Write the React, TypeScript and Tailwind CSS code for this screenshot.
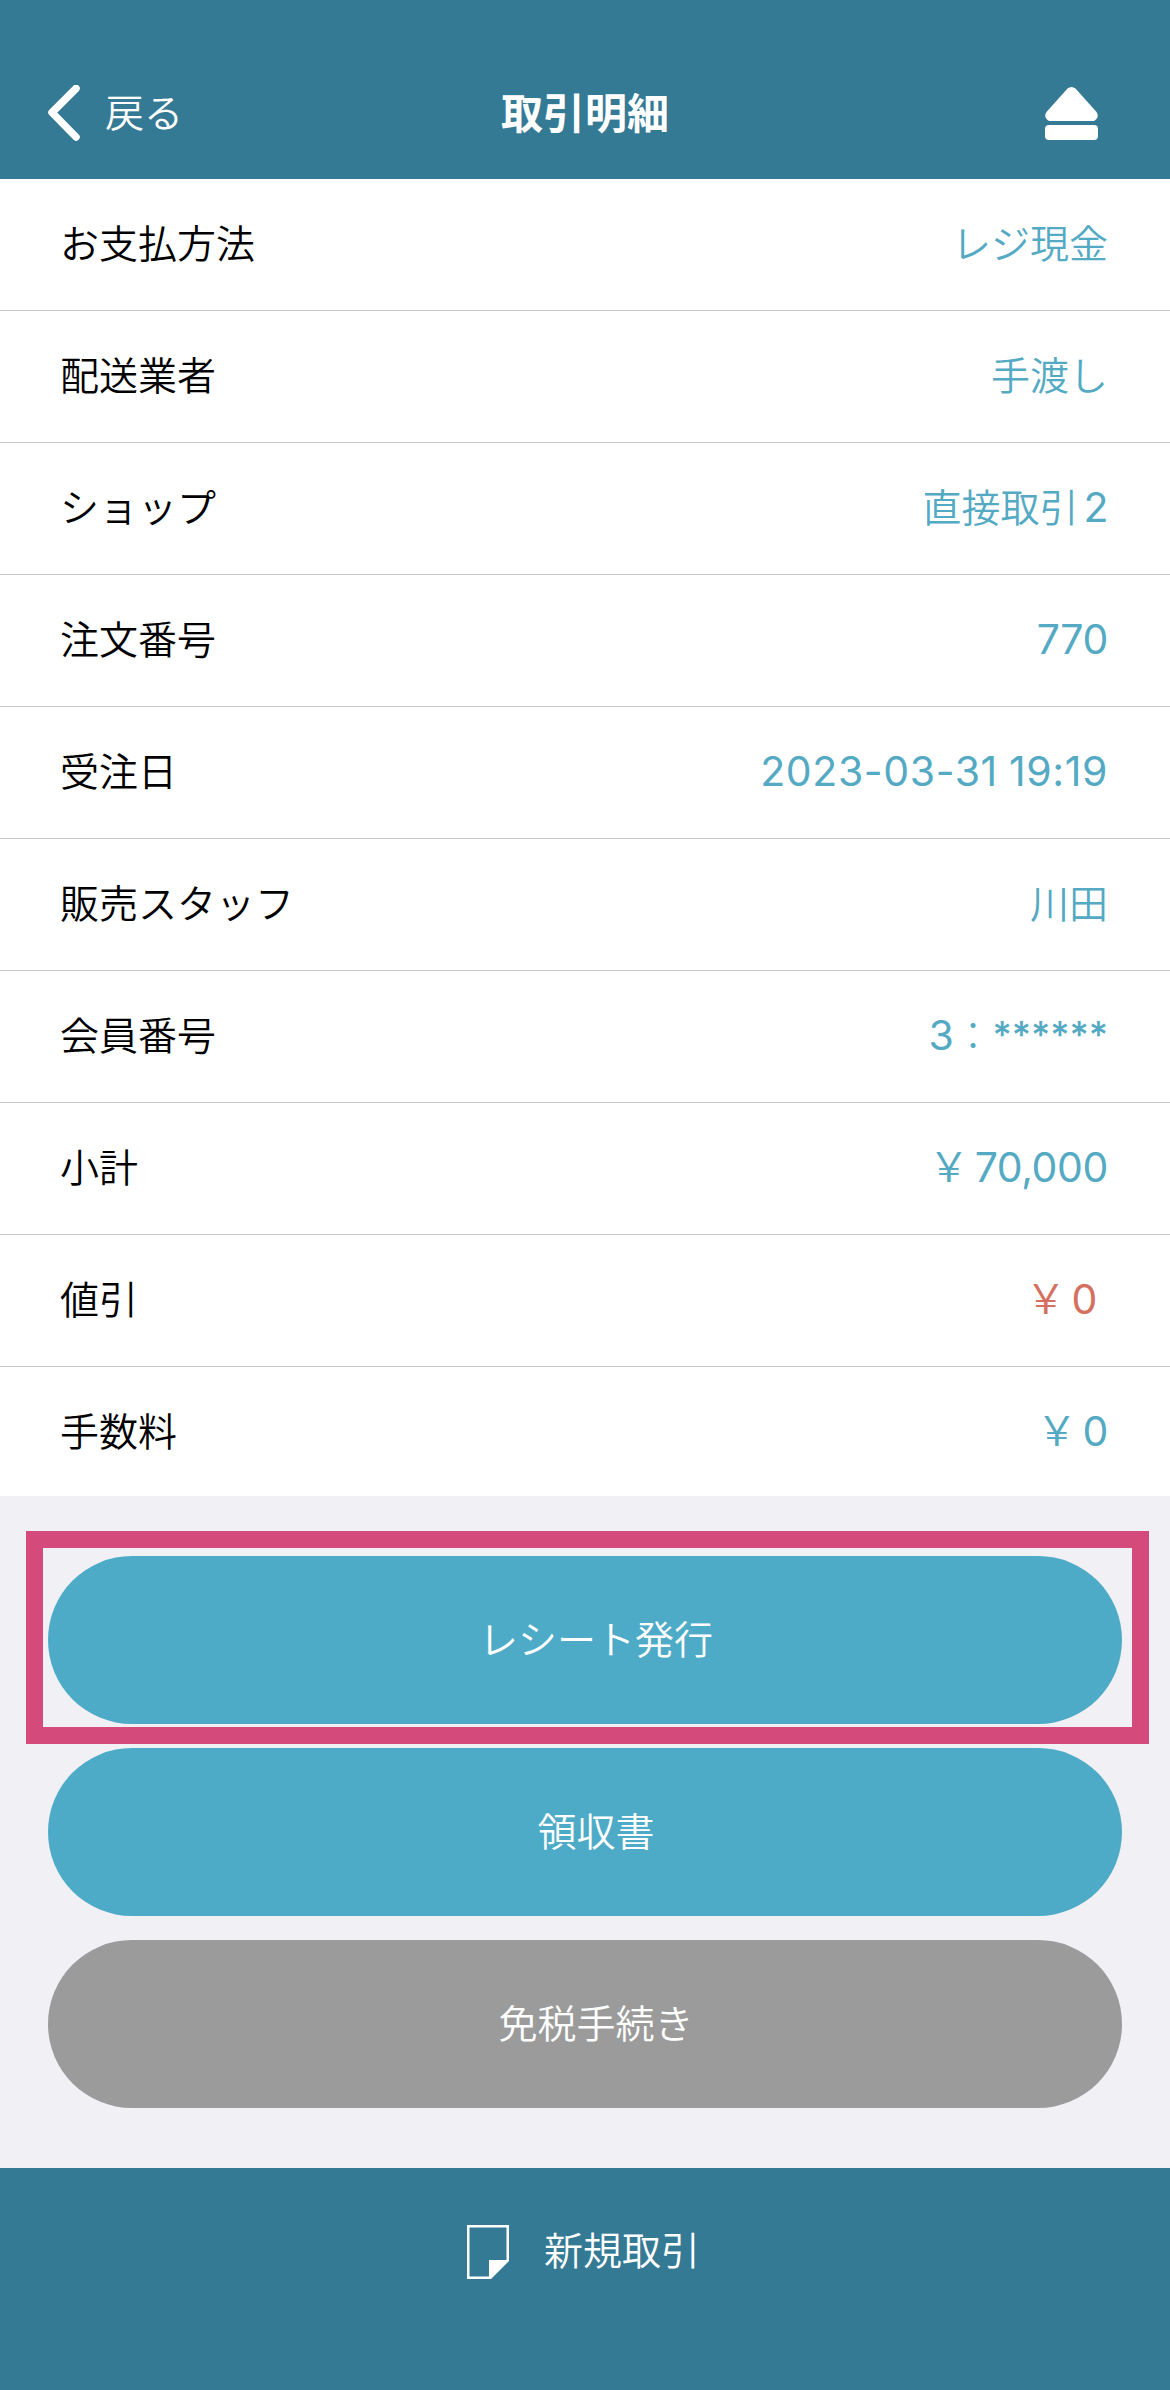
import type { ReactNode } from "react";

type Row = { label: string; value: ReactNode; tone?: string };

function Num({ children, className = "tracking-[-0.4px]" }: { children: ReactNode; className?: string }) {
  return <span className={`font-['Inter','Noto_Sans_CJK_JP',sans-serif] text-[41px] font-normal ${className}`}>{children}</span>;
}

function Yen({ amount }: { amount: string }) {
  return (
    <>
      <span className="mr-[12px] origin-right scale-x-[1.2] font-['Inter',sans-serif] text-[41px] font-light">¥</span>
      <Num>{amount}</Num>
    </>
  );
}

function Ja({ children }: { children: ReactNode }) {
  return <span className="pb-[3px]">{children}</span>;
}

const rows: Row[] = [
  { label: "お支払方法", value: <Ja>レジ現金</Ja> },
  { label: "配送業者", value: <Ja>手渡し</Ja> },
  { label: "ショップ", value: <><span className="mr-[5px]">直接取引</span><Num>2</Num></> },
  { label: "注文番号", value: <Num>770</Num> },
  { label: "受注日", value: <Num className="tracking-[0.6px] [word-spacing:-1px]">2023-03-31 19:19</Num> },
  { label: "販売スタッフ", value: <Ja>川田</Ja> },
  {
    label: "会員番号",
    value: (
      <>
        <Num>3</Num>
        <span className="font-light">：</span>
        <span className="-translate-y-[2px] font-['Inter',sans-serif] text-[37px] font-medium">******</span>
      </>
    ),
  },
  { label: "小計", value: <Yen amount="70,000" /> },
  { label: "値引", value: <Yen amount="0" />, tone: "text-[#d4705f] pr-[11px]" },
  { label: "手数料", value: <Yen amount="0" /> },
];

function ActionButton({ label, color }: { label: string; color: string }) {
  return (
    <button className={`flex h-[168px] w-full items-center justify-center rounded-full pb-[6px] pl-[22px] text-[39px] leading-none font-[350] text-white ${color}`}>
      {label}
    </button>
  );
}

export default function App() {
  return (
    <div className="flex h-[2390px] w-[1170px] flex-col bg-[#f1f0f5] font-['Noto_Sans_CJK_JP',sans-serif] font-[350]">
      <header className="grid h-[179px] grid-cols-3 items-center bg-[#357a94] px-12 pt-[48px] text-white">
        <button className="flex items-center gap-[25px] text-[39px] leading-none font-[350]">
          <svg width="32" height="57" viewBox="0 0 32 57" fill="none" stroke="white" strokeWidth="7.5" strokeLinecap="round" strokeLinejoin="round">
            <path d="M28 3.500 4 27.500 28 52" />
          </svg>
          <span className="pb-[6px]">戻る</span>
        </button>
        <h1 className="pb-[5px] text-center text-[42px] leading-none font-bold">取引明細</h1>
        <button className="mr-6 justify-self-end">
          <svg width="53" height="53" viewBox="0 0 53 53" fill="white">
            <path d="M22.5 1.6Q26.5-1.6 30.5 1.6L51.5 25Q55 30.500 49 34H4Q-2 30.500 1.500 25Z" />
            <rect y="38" width="53" height="15" rx="4" />
          </svg>
        </button>
      </header>

      <main className="bg-white">
        {rows.map((row) => (
          <div key={row.label} className="flex h-[132px] items-center justify-between border-b border-[#c8c8c9] pr-[62px] pb-[3px] pl-[60px] text-[39px] leading-none last:h-[129px] last:border-b-0 last:pb-[1px]">
            <span className="pb-[3px] text-black">{row.label}</span>
            <span className={`flex items-baseline whitespace-pre ${row.tone ?? "text-[#54a9c3]"}`}>{row.value}</span>
          </div>
        ))}
      </main>

      <section className="flex flex-1 flex-col gap-6 px-12 pt-[60px]">
        <div className="relative">
          <ActionButton label="レシート発行" color="bg-[#4eabc7]" />
          <div className="pointer-events-none absolute -top-[25px] -right-[27px] -bottom-[20px] -left-[22px] border-[17px] border-[#d44a7a]" />
        </div>
        <ActionButton label="領収書" color="bg-[#4eabc7]" />
        <ActionButton label="免税手続き" color="bg-[#9b9b9b]" />
      </section>

      <footer className="flex h-[222px] items-start justify-center gap-[35px] bg-[#357a94] pt-[57px] pr-[3px] text-white">
        <svg width="42" height="54" viewBox="0 0 42 54" fill="none">
          <path d="M1.250 1.250H40.750V35.500L23.500 52.750H1.250Z" stroke="white" strokeWidth="2.500" />
          <path d="M22 35H42L23 54H22Z" fill="white" />
        </svg>
        <span className="pt-[4px] text-[39px] leading-none">新規取引</span>
      </footer>
    </div>
  );
}
